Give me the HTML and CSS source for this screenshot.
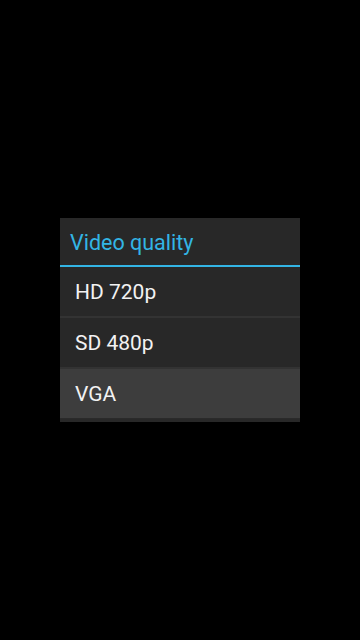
FILE: index.html
```html
<!DOCTYPE html>
<html>
<head>
<meta charset="utf-8">
<link rel="stylesheet" href="styles.css">
</head>
<body>
<div class="screen">
  <div class="dialog">
    <div class="title">Video quality</div>
    <div class="list">
      <div class="item">HD 720p</div>
      <div class="item">SD 480p</div>
      <div class="item selected">VGA</div>
    </div>
  </div>
</div>
</body>
</html>
```
FILE: styles.css
```css
html, body {
  margin: 0;
  padding: 0;
  background: #000;
}
.screen {
  width: 360px;
  height: 640px;
  display: flex;
  align-items: center;
  justify-content: center;
  font-family: Roboto, "Noto Sans", sans-serif;
}
.dialog {
  width: 240px;
  background: #282828;
  padding-bottom: 3px;
  margin-top: -1px;
}
.title {
  height: 49px;
  box-sizing: border-box;
  padding-left: 10px;
  padding-top: 3px;
  display: flex;
  align-items: center;
  color: #33b5e5;
  font-size: 21.5px;
  border-bottom: 2px solid #33b5e5;
}
.list {
  display: flex;
  flex-direction: column;
}
.item {
  height: 51px;
  box-sizing: border-box;
  padding-left: 15px;
  padding-top: 2px;
  display: flex;
  align-items: center;
  color: #f2f2f2;
  font-size: 21px;
  border-bottom: 2px solid #333333;
}
.item.selected {
  background: #3d3d3d;
  border-bottom: 1px solid #2a2a2a;
  height: 50px;
}
```
